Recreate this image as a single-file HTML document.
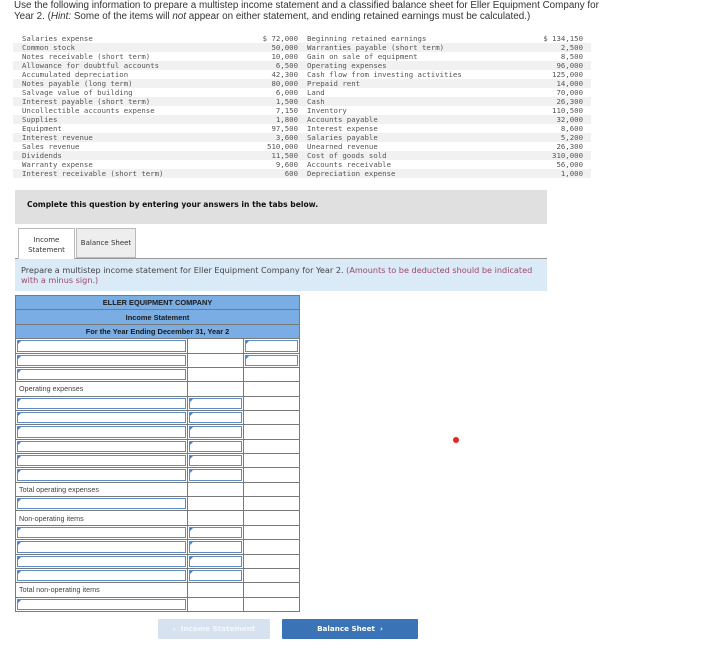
<!DOCTYPE html>
<html><head><style>
*{margin:0;padding:0;box-sizing:border-box}
body{width:727px;height:648px;background:#fff;position:relative;overflow:hidden;font-family:"Liberation Sans",Arial,sans-serif;color:#222}
.abs{position:absolute}
.intro{left:14px;top:0;font-size:9.85px;line-height:11px;color:#333;width:710px;white-space:nowrap}
.dt{left:13px;top:34px;width:578px;font-family:"DejaVu Sans Mono","Liberation Mono",monospace;font-size:7.35px;color:#555}
.dt .r{height:9px;line-height:9px;position:relative}
.dt .r:nth-child(even){background:#f1f1f1}
.dt span{position:absolute;white-space:pre}
.gray{left:15px;top:190px;width:532px;height:34px;background:#e0e0e0;font-family:"DejaVu Sans",Verdana,sans-serif;font-weight:bold;font-size:7.6px;line-height:29px;padding-left:12px;color:#111}
.tab{top:228px;height:31px;border:1px solid #bbb;font-family:"DejaVu Sans",Verdana,sans-serif;font-size:7px;text-align:center;color:#333}
.info{left:15px;top:258px;width:532px;height:33px;background:#daeaf7;border-top:1px solid #999;font-family:"DejaVu Sans",Verdana,sans-serif;font-size:8.15px;line-height:10px;padding:6px 0 0 6px;color:#444;white-space:nowrap}
.info b{font-weight:normal;color:#a0466a}
table{position:absolute;left:15px;top:295px;border-collapse:collapse;width:284px;table-layout:fixed}
td{border:1px solid #7a7a7a;height:14.37px;padding:0;font-size:7.2px;position:relative;color:#444}
.h td{background:#7aade4;text-align:center;font-weight:bold;color:#1a1a1a;height:14.4px;font-size:7.4px}
.i::after{content:"";position:absolute;left:1px;top:1px;right:1px;bottom:1px;border:1.5px solid #5e8cc6}
.i::before{content:"";position:absolute;left:2px;top:2px;border-top:3px solid #3d7fd0;border-right:3px solid transparent}
.t{padding-left:3px}
.btn{top:619px;height:20px;font-family:"DejaVu Sans",Verdana,sans-serif;font-weight:bold;font-size:7.2px;color:#fff;line-height:20px;text-align:center;border-radius:1px}
</style></head><body>
<div class="abs intro">Use the following information to prepare a multistep income statement and a classified balance sheet for Eller Equipment Company for<br>Year 2. (<i>Hint:</i> Some of the items will <i>not</i> appear on either statement, and ending retained earnings must be calculated.)</div>
<div class="abs dt">
<div class="r"><span style="left:9px">Salaries expense</span><span style="right:293px">$ 72,000</span><span style="left:294px">Beginning retained earnings</span><span style="right:8px">$ 134,150</span></div>
<div class="r"><span style="left:9px">Common stock</span><span style="right:293px">50,000</span><span style="left:294px">Warranties payable (short term)</span><span style="right:8px">2,500</span></div>
<div class="r"><span style="left:9px">Notes receivable (short term)</span><span style="right:293px">10,000</span><span style="left:294px">Gain on sale of equipment</span><span style="right:8px">8,500</span></div>
<div class="r"><span style="left:9px">Allowance for doubtful accounts</span><span style="right:293px">6,500</span><span style="left:294px">Operating expenses</span><span style="right:8px">96,000</span></div>
<div class="r"><span style="left:9px">Accumulated depreciation</span><span style="right:293px">42,300</span><span style="left:294px">Cash flow from investing activities</span><span style="right:8px">125,000</span></div>
<div class="r"><span style="left:9px">Notes payable (long term)</span><span style="right:293px">80,000</span><span style="left:294px">Prepaid rent</span><span style="right:8px">14,000</span></div>
<div class="r"><span style="left:9px">Salvage value of building</span><span style="right:293px">6,000</span><span style="left:294px">Land</span><span style="right:8px">70,000</span></div>
<div class="r"><span style="left:9px">Interest payable (short term)</span><span style="right:293px">1,500</span><span style="left:294px">Cash</span><span style="right:8px">26,300</span></div>
<div class="r"><span style="left:9px">Uncollectible accounts expense</span><span style="right:293px">7,150</span><span style="left:294px">Inventory</span><span style="right:8px">110,500</span></div>
<div class="r"><span style="left:9px">Supplies</span><span style="right:293px">1,800</span><span style="left:294px">Accounts payable</span><span style="right:8px">32,000</span></div>
<div class="r"><span style="left:9px">Equipment</span><span style="right:293px">97,500</span><span style="left:294px">Interest expense</span><span style="right:8px">8,600</span></div>
<div class="r"><span style="left:9px">Interest revenue</span><span style="right:293px">3,600</span><span style="left:294px">Salaries payable</span><span style="right:8px">5,200</span></div>
<div class="r"><span style="left:9px">Sales revenue</span><span style="right:293px">510,000</span><span style="left:294px">Unearned revenue</span><span style="right:8px">26,300</span></div>
<div class="r"><span style="left:9px">Dividends</span><span style="right:293px">11,500</span><span style="left:294px">Cost of goods sold</span><span style="right:8px">310,000</span></div>
<div class="r"><span style="left:9px">Warranty expense</span><span style="right:293px">9,600</span><span style="left:294px">Accounts receivable</span><span style="right:8px">56,000</span></div>
<div class="r"><span style="left:9px">Interest receivable (short term)</span><span style="right:293px">600</span><span style="left:294px">Depreciation expense</span><span style="right:8px">1,000</span></div>
</div>
<div class="abs gray">Complete this question by entering your answers in the tabs below.</div>
<div class="abs tab" style="left:18px;width:57px;border-bottom:none;background:#fff;padding-top:6px;line-height:10px;height:31px;z-index:2">Income<br>Statement</div>
<div class="abs tab" style="left:76px;width:60px;height:30px;background:#eee;line-height:29px">Balance Sheet</div>
<div class="abs info">Prepare a multistep income statement for Eller Equipment Company for Year 2. <b>(Amounts to be deducted should be indicated<br>with a minus sign.)</b></div>
<table>
<colgroup><col style="width:172px"><col style="width:56px"><col style="width:56px"></colgroup>
<tr class="h"><td colspan="3">ELLER EQUIPMENT COMPANY</td></tr>
<tr class="h"><td colspan="3">Income Statement</td></tr>
<tr class="h"><td colspan="3">For the Year Ending December 31, Year 2</td></tr>
<tr><td class="i"></td><td></td><td class="i"></td></tr>
<tr><td class="i"></td><td></td><td class="i"></td></tr>
<tr><td class="i"></td><td></td><td></td></tr>
<tr><td class="t">Operating expenses</td><td></td><td></td></tr>
<tr><td class="i"></td><td class="i"></td><td></td></tr>
<tr><td class="i"></td><td class="i"></td><td></td></tr>
<tr><td class="i"></td><td class="i"></td><td></td></tr>
<tr><td class="i"></td><td class="i"></td><td></td></tr>
<tr><td class="i"></td><td class="i"></td><td></td></tr>
<tr><td class="i"></td><td class="i"></td><td></td></tr>
<tr><td class="t">Total operating expenses</td><td></td><td></td></tr>
<tr><td class="i"></td><td></td><td></td></tr>
<tr><td class="t">Non-operating items</td><td></td><td></td></tr>
<tr><td class="i"></td><td class="i"></td><td></td></tr>
<tr><td class="i"></td><td class="i"></td><td></td></tr>
<tr><td class="i"></td><td class="i"></td><td></td></tr>
<tr><td class="i"></td><td class="i"></td><td></td></tr>
<tr><td class="t">Total non-operating items</td><td></td><td></td></tr>
<tr><td class="i"></td><td></td><td></td></tr>
</table>
<div class="abs" style="left:453px;top:437px;width:6px;height:6px;border-radius:50%;background:#f02020"></div>
<div class="abs btn" style="left:158px;width:112px;background:#d6e2f0;color:#f4f7fb">&lsaquo;&nbsp; Income Statement</div>
<div class="abs btn" style="left:282px;width:136px;background:#3a74b7">Balance Sheet &nbsp;&rsaquo;</div>
</body></html>
